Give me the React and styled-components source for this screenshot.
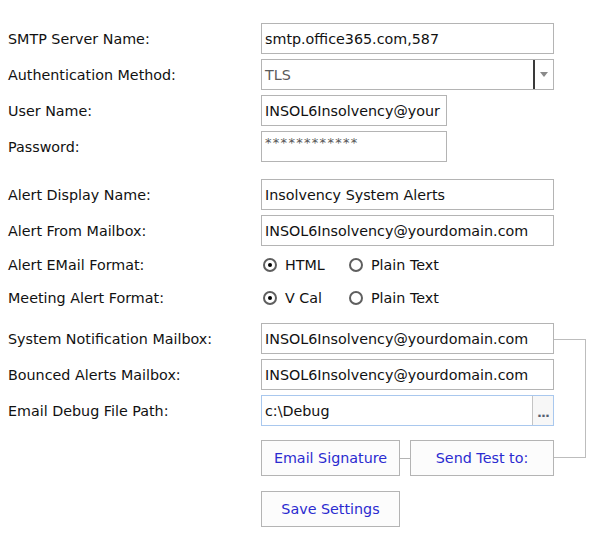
import React from "react";
import styled, { createGlobalStyle } from "styled-components";

const FONT = `"DejaVu Sans", Verdana, sans-serif`;

const GlobalStyle = createGlobalStyle`
  body {
    margin: 0;
    background: #ffffff;
    font-family: ${FONT};
  }
`;

function App() {
  return (
    <>
      <GlobalStyle />
      <Page>
        <Form>
          <Row $h={31}>
            <Label>SMTP Server Name:</Label>
            <Field>smtp.office365.com,587</Field>
          </Row>
          <Row $h={31} $mt={5}>
            <Label>Authentication Method:</Label>
            <Field $muted>
              <ComboText>TLS</ComboText>
              <DropButton>
                <svg width="8" height="5" viewBox="0 0 8 5">
                  <path d="M0 0 H8 L4 5 Z" fill="#8a8a8a" />
                </svg>
              </DropButton>
            </Field>
          </Row>
          <Row $h={31} $mt={5}>
            <Label>User Name:</Label>
            <Field $w={186}>INSOL6Insolvency@your</Field>
          </Row>
          <Row $h={31} $mt={5}>
            <Label>Password:</Label>
            <Field $w={186}>
              <Stars>************</Stars>
            </Field>
          </Row>

          <Row $h={31} $mt={17}>
            <Label>Alert Display Name:</Label>
            <Field>Insolvency System Alerts</Field>
          </Row>
          <Row $h={31} $mt={5}>
            <Label>Alert From Mailbox:</Label>
            <Field>INSOL6Insolvency@yourdomain.com</Field>
          </Row>
          <Row $h={28} $mt={5}>
            <Label>Alert EMail Format:</Label>
            <RadioGroup>
              <RadioOption $first>
                <Radio $checked />
                HTML
              </RadioOption>
              <RadioOption>
                <Radio />
                Plain Text
              </RadioOption>
            </RadioGroup>
          </Row>
          <Row $h={28} $mt={5}>
            <Label>Meeting Alert Format:</Label>
            <RadioGroup>
              <RadioOption $first>
                <Radio $checked />
                V Cal
              </RadioOption>
              <RadioOption>
                <Radio />
                Plain Text
              </RadioOption>
            </RadioGroup>
          </Row>

          <Row $h={31} $mt={11}>
            <Label>System Notification Mailbox:</Label>
            <Field>INSOL6Insolvency@yourdomain.com</Field>
          </Row>
          <Row $h={31} $mt={5}>
            <Label>Bounced Alerts Mailbox:</Label>
            <Field>INSOL6Insolvency@yourdomain.com</Field>
          </Row>
          <Row $h={31} $mt={5}>
            <Label>Email Debug File Path:</Label>
            <Field $focus>
              <ComboText>c:\Debug</ComboText>
              <BrowseButton>...</BrowseButton>
            </Field>
          </Row>

          <Row $h={36} $mt={14}>
            <span />
            <ButtonRow>
              <Button $w={139}>Email Signature</Button>
              <Link />
              <Button $w={144}>Send Test to:</Button>
            </ButtonRow>
          </Row>
          <Row $h={36} $mt={15}>
            <span />
            <ButtonRow>
              <Button $w={139}>Save Settings</Button>
            </ButtonRow>
          </Row>

          <Bracket />
        </Form>
      </Page>
    </>
  );
}

const Page = styled.div`
  padding: 23px 0 0 8px;
  width: 597px;
  height: 534px;
  box-sizing: border-box;
`;

const Form = styled.div`
  position: relative;
  display: flex;
  flex-direction: column;
`;

const Row = styled.div`
  display: grid;
  grid-template-columns: 253px 293px;
  align-items: center;
  height: ${(p) => p.$h}px;
  margin-top: ${(p) => p.$mt || 0}px;
`;

const Label = styled.div`
  font-size: 14.3px;
  color: #111111;
  white-space: nowrap;
`;

const Field = styled.div`
  position: relative;
  z-index: 1;
  display: flex;
  align-items: center;
  box-sizing: border-box;
  width: ${(p) => p.$w || 293}px;
  height: 31px;
  padding-left: 3px;
  background: #ffffff;
  border: 1px solid ${(p) => (p.$focus ? "#a9c8ee" : "#b4b4b4")};
  font-size: 14.3px;
  color: ${(p) => (p.$muted ? "#5a5a5a" : "#111111")};
  white-space: nowrap;
  overflow: hidden;
`;

const ComboText = styled.span`
  flex: 1;
`;

const DropButton = styled.div`
  display: flex;
  align-items: center;
  justify-content: center;
  width: 18px;
  height: 100%;
  border-left: 2px solid #3a3a3a;
`;

const BrowseButton = styled.div`
  display: flex;
  align-items: flex-end;
  justify-content: center;
  box-sizing: border-box;
  width: 21px;
  height: 100%;
  padding-bottom: 6px;
  border-left: 1px solid #c4c4c4;
  background: #f7f7f7;
  color: #556070;
  font-size: 13px;
  font-weight: bold;
  letter-spacing: -1px;
  line-height: 1;
`;

const Stars = styled.span`
  margin-top: -8px;
  font-size: 13px;
  letter-spacing: 1.3px;
  color: #555555;
`;

const RadioGroup = styled.div`
  display: flex;
  align-items: center;
  padding-left: 2px;
`;

const RadioOption = styled.label`
  display: flex;
  align-items: center;
  gap: 8px;
  width: ${(p) => (p.$first ? "86px" : "auto")};
  font-size: 14.3px;
  color: #111111;
`;

const Radio = styled.span`
  position: relative;
  box-sizing: border-box;
  width: 14px;
  height: 14px;
  border: 2px solid #5f5f5f;
  border-radius: 50%;
  background: #ffffff;

  &::after {
    content: "";
    display: ${(p) => (p.$checked ? "block" : "none")};
    position: absolute;
    left: 3px;
    top: 3px;
    width: 4px;
    height: 4px;
    border-radius: 50%;
    background: #000000;
  }
`;

const ButtonRow = styled.div`
  display: flex;
  align-items: center;
  height: 36px;
`;

const Button = styled.button`
  box-sizing: border-box;
  width: ${(p) => p.$w}px;
  height: 36px;
  padding: 0;
  border: 1px solid #b4b4b4;
  background: #fcfcfc;
  color: #2b2bd0;
  font-family: ${FONT};
  font-size: 14.3px;
  position: relative;
  z-index: 1;
`;

const Link = styled.div`
  width: 10px;
  height: 1px;
  background: #b4b4b4;
`;

const Bracket = styled.div`
  position: absolute;
  left: 546px;
  top: 316px;
  width: 32px;
  height: 119px;
  box-sizing: border-box;
  border: 1px solid #bdbdbd;
  border-left: none;
`;

export default App;
